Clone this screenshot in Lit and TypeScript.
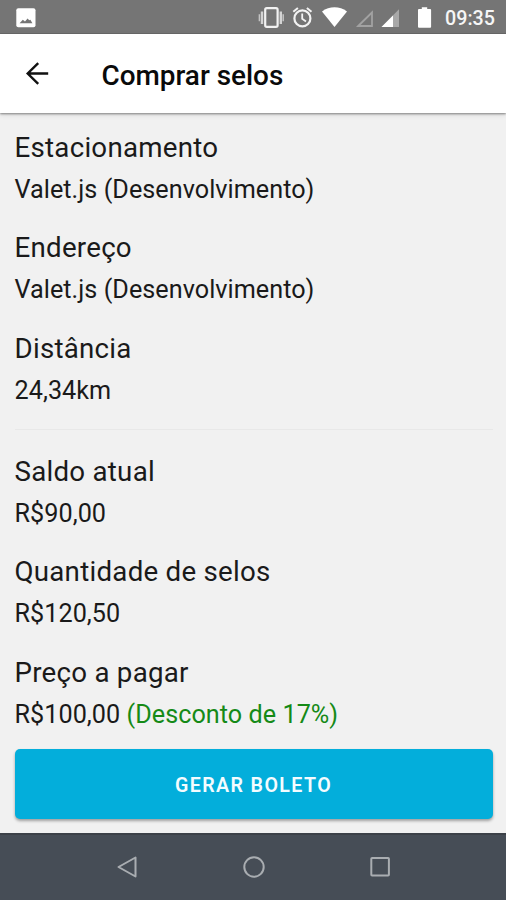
import { LitElement, html, css, nothing } from "lit";
import { customElement } from "lit/decorators.js";

interface Field {
  label: string;
  value: string;
  note?: string;
}

const PARKING: Field[] = [
  { label: "Estacionamento", value: "Valet.js (Desenvolvimento)" },
  { label: "Endereço", value: "Valet.js (Desenvolvimento)" },
  { label: "Distância", value: "24,34km" },
];

const PURCHASE: Field[] = [
  { label: "Saldo atual", value: "R$90,00" },
  { label: "Quantidade de selos", value: "R$120,50" },
  { label: "Preço a pagar", value: "R$100,00", note: "(Desconto de 17%)" },
];

@customElement("status-bar")
export class StatusBar extends LitElement {
  static styles = css`
    :host {
      display: flex;
      align-items: center;
      height: 34px;
      box-sizing: border-box;
      padding: 0 11px 0 16px;
      background: #757575;
      border-bottom: 1px solid #6a6a6a;
      color: #f6f6f6;
    }
    svg {
      display: block;
      flex: none;
    }
    .icons {
      margin-left: auto;
    }
    .time {
      width: 50px;
      margin-left: 13px;
      padding-top: 3px;
      font-size: 19.7px;
      font-weight: 500;
      line-height: 31px;
      white-space: nowrap;
    }
  `;

  render() {
    return html`
      <svg width="20" height="34" viewBox="16 0 20 34">
        <rect x="16.3" y="8.3" width="19.2" height="19" rx="2" fill="#fff" />
        <path d="M19.600 23.200l3.200-3.400 2.200 1.600 2.600-3 1.600 1.800 1.200-.4 2 3.400z" fill="#757575" />
      </svg>
      <svg class="icons" width="176" height="34" viewBox="256 0 176 34">
        <rect x="265.2" y="8.2" width="12.4" height="18.600" rx="1.6" fill="none" stroke="#f2f2f2" stroke-width="2.2" />
        <path d="M262 11.5v12.5M280.8 11.5v12.5" stroke="#d4d4d4" stroke-width="2.400" />
        <path d="M259.4 14.3v7M283.2 14.3v7" stroke="#c4c4c4" stroke-width="1.5" />
        <circle cx="302.400" cy="18.400" r="8" fill="none" stroke="#f2f2f2" stroke-width="2.200" />
        <path d="M302.200 13.500v5.300l3.800 2.600" fill="none" stroke="#f2f2f2" stroke-width="1.800" />
        <path d="M293.300 11.800l4.600-3.800M311.500 11.800l-4.600-3.800" stroke="#f2f2f2" stroke-width="2" />
        <path d="M322 11.400C329.500 6 339.500 6 347 11.400L334.500 27z" fill="#fff" />
        <path d="M358.200 26L372 12.500V26z" fill="none" stroke="#a2a2a2" stroke-width="1.8" />
        <path d="M381.500 27L399 9.300V27z" fill="#a8a8a8" />
        <path d="M381.500 27L393 15.500V27z" fill="#fff" />
        <path d="M419 9h2.800V7.200h5.400V9h2.900q1 0 1 1v16.800q0 1-1 1H419q-1 0-1-1V10q0-1 1-1z" fill="#fff" />
      </svg>
      <span class="time">09:35</span>
    `;
  }
}

@customElement("app-header")
export class AppHeader extends LitElement {
  static styles = css`
    :host {
      display: flex;
      align-items: center;
      height: 79px;
      padding-left: 25px;
      background: #fff;
      box-shadow: 0 1px 2px rgba(0, 0, 0, 0.42), 0 2px 5px rgba(0, 0, 0, 0.1);
      z-index: 1;
    }
    svg {
      display: block;
      width: 24px;
      height: 79px;
      margin-right: 52.500px;
    }
    h1 {
      margin: 4px 0 0;
      font-size: 27.900px;
      font-weight: 500;
      line-height: 36px;
      color: #0a0a0a;
    }
  `;

  render() {
    return html`
      <svg viewBox="25 34 24 79">
        <path d="M48.200 73.500H27.500M38.200 63.200L27.700 73.500L38.200 83.800" fill="none" stroke="#111" stroke-width="2.400" />
      </svg>
      <h1>Comprar selos</h1>
    `;
  }
}

@customElement("field-group")
export class FieldGroup extends LitElement {
  static properties = { fields: { attribute: false } };
  declare fields: Field[];

  static styles = css`
    :host {
      display: flex;
      flex-direction: column;
      gap: 16.400px;
    }
    dl,
    dt,
    dd {
      margin: 0;
    }
    dt {
      font-size: 27.700px;
      line-height: 42px;
      letter-spacing: 0.250px;
    }
    dd {
      font-size: 25.200px;
      line-height: 42px;
      letter-spacing: 0.040px;
    }
    .note {
      color: #158a17;
    }
  `;

  render() {
    return this.fields.map(
      (f) => html`<dl>
        <dt>${f.label}</dt>
        <dd>${f.value}${f.note ? html` <span class="note">${f.note}</span>` : nothing}</dd>
      </dl>`,
    );
  }
}

@customElement("nav-bar")
export class NavBar extends LitElement {
  static styles = css`
    :host {
      display: flex;
      justify-content: center;
      align-items: center;
      gap: 102.500px;
      height: 67px;
      box-sizing: border-box;
      padding: 0 0 2px 1px;
      background: #464d56;
      border-top: 2px solid #3c4148;
    }
    svg {
      display: block;
      width: 24px;
      height: 24px;
      fill: none;
      stroke: #a9adb1;
      stroke-width: 2;
    }
  `;

  render() {
    return html`
      <svg viewBox="0 0 24 24"><path d="M20.500 2.500V21.500L3.500 12z" stroke-linejoin="round" /></svg>
      <svg viewBox="0 0 24 24"><circle cx="12" cy="12" r="9.700" /></svg>
      <svg viewBox="0 0 24 24"><rect x="3.300" y="3" width="17.600" height="17.600" rx="0.800" /></svg>
    `;
  }
}

@customElement("app-root")
export class AppRoot extends LitElement {
  static styles = css`
    :host {
      display: flex;
      flex-direction: column;
      width: 506px;
      height: 900px;
      overflow: hidden;
      background: #f1f1f1;
      color: #1a1a1a;
      font-family: Roboto, "Liberation Sans", sans-serif;
    }
    main {
      flex: 1;
      display: flex;
      flex-direction: column;
      padding: 14px 13.500px 0 14.500px;
    }
    hr {
      width: 100%;
      height: 1px;
      margin: 17px 0 21px;
      border: 0;
      background: #e8e8e8;
    }
    button {
      height: 70px;
      flex: none;
      margin-top: 13.500px;
      padding: 2px 0 0;
      border: 0;
      border-radius: 5px;
      background: #03aedb;
      box-shadow: 0 2px 3px rgba(0, 0, 0, 0.34);
      color: #f4fcff;
      font: 600 19.600px Roboto, "Liberation Sans", sans-serif;
      letter-spacing: 1.400px;
      text-transform: uppercase;
    }
  `;

  render() {
    return html`
      <status-bar></status-bar>
      <app-header></app-header>
      <main>
        <field-group .fields=${PARKING}></field-group>
        <hr />
        <field-group .fields=${PURCHASE}></field-group>
        <button>Gerar boleto</button>
      </main>
      <nav-bar></nav-bar>
    `;
  }
}
